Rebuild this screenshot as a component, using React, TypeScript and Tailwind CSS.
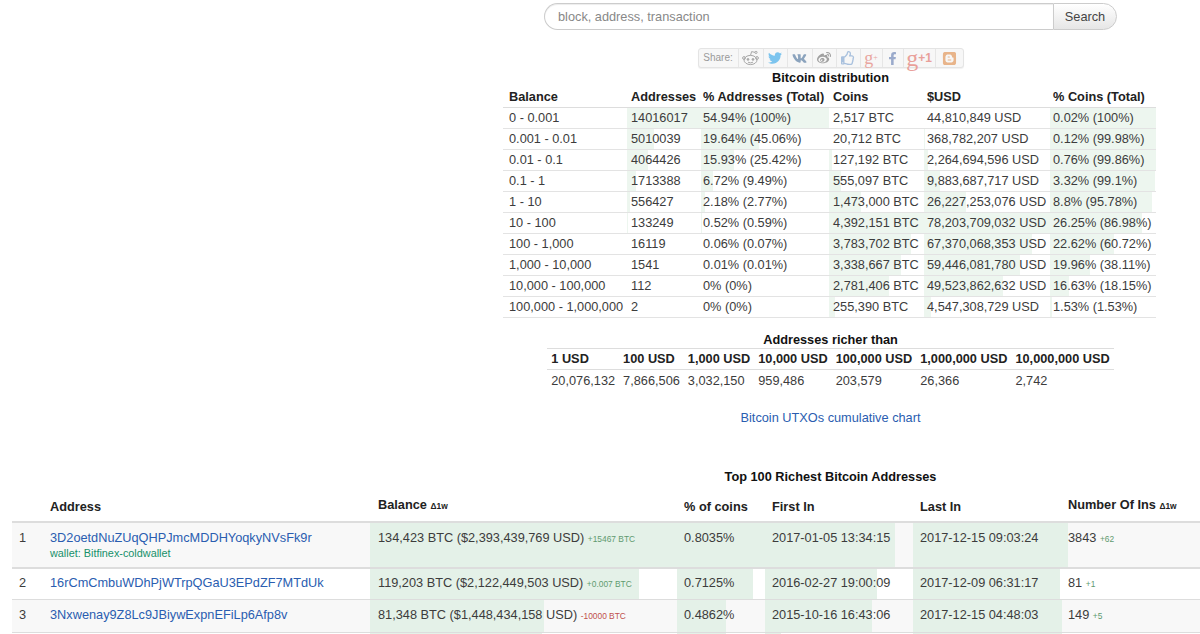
import React from "react";
import { FaTwitter, FaVk, FaWeibo, FaRegThumbsUp, FaFacebookF, FaBlogger } from "react-icons/fa";

const bar = (pct: number, color: string) => ({
  backgroundImage: `linear-gradient(90deg, ${color} ${pct}%, transparent ${pct}%)`,
});
const T = "#edf6ef";
const B = "#e4f1e8";

const dist = [
  ["0 - 0.001", "14016017", 100, "54.94% (100%)", 100, "2,517 BTC", 0.06, "44,810,849 USD", "0.02% (100%)", 100],
  ["0.001 - 0.01", "5010039", 36, "19.64% (45.06%)", 45.06, "20,712 BTC", 0.5, "368,782,207 USD", "0.12% (99.98%)", 99.98],
  ["0.01 - 0.1", "4064426", 29, "15.93% (25.42%)", 25.42, "127,192 BTC", 2.9, "2,264,694,596 USD", "0.76% (99.86%)", 99.86],
  ["0.1 - 1", "1713388", 12, "6.72% (9.49%)", 9.49, "555,097 BTC", 12.6, "9,883,687,717 USD", "3.32% (99.1%)", 99.1],
  ["1 - 10", "556427", 4, "2.18% (2.77%)", 2.77, "1,473,000 BTC", 33.5, "26,227,253,076 USD", "8.8% (95.78%)", 95.78],
  ["10 - 100", "133249", 1, "0.52% (0.59%)", 0.59, "4,392,151 BTC", 100, "78,203,709,032 USD", "26.25% (86.98%)", 86.98],
  ["100 - 1,000", "16119", 0, "0.06% (0.07%)", 0.07, "3,783,702 BTC", 86, "67,370,068,353 USD", "22.62% (60.72%)", 60.72],
  ["1,000 - 10,000", "1541", 0, "0.01% (0.01%)", 0.01, "3,338,667 BTC", 76, "59,446,081,780 USD", "19.96% (38.11%)", 38.11],
  ["10,000 - 100,000", "112", 0, "0% (0%)", 0, "2,781,406 BTC", 63, "49,523,862,632 USD", "16.63% (18.15%)", 18.15],
  ["100,000 - 1,000,000", "2", 0, "0% (0%)", 0, "255,390 BTC", 5.8, "4,547,308,729 USD", "1.53% (1.53%)", 1.53],
] as const;

const richer = [
  ["1 USD", "20,076,132"],
  ["100 USD", "7,866,506"],
  ["1,000 USD", "3,032,150"],
  ["10,000 USD", "959,486"],
  ["100,000 USD", "203,579"],
  ["1,000,000 USD", "26,366"],
  ["10,000,000 USD", "2,742"],
];

const rich = [
  {
    n: "1", a: "3D2oetdNuZUqQHPJmcMDDHYoqkyNVsFk9r", wallet: "wallet: Bitfinex-coldwallet",
    b: "134,423 BTC ($2,393,439,769 USD)", d: "+15467 BTC", neg: false, bp: 100,
    pc: "0.8035%", pp: 100, f: "2017-01-05 13:34:15", fp: 88, l: "2017-12-15 09:03:24", lp: 100,
    i: "3843", id: "+62", rowH: "h-[46px]", pt: "pt-[6px]",
  },
  {
    n: "2", a: "16rCmCmbuWDhPjWTrpQGaU3EPdZF7MTdUk", wallet: "",
    b: "119,203 BTC ($2,122,449,503 USD)", d: "+0.007 BTC", neg: false, bp: 87.6,
    pc: "0.7125%", pp: 86, f: "2016-02-27 19:00:09", fp: 76, l: "2017-12-09 06:31:17", lp: 95,
    i: "81", id: "+1", rowH: "h-[31px]", pt: "pt-[5px]",
  },
  {
    n: "3", a: "3Nxwenay9Z8Lc9JBiywExpnEFiLp6Afp8v", wallet: "",
    b: "81,348 BTC ($1,448,434,158 USD)", d: "-10000 BTC", neg: true, bp: 56.7,
    pc: "0.4862%", pp: 56, f: "2015-10-16 16:43:06", fp: 72, l: "2017-12-15 04:48:03", lp: 96,
    i: "149", id: "+5", rowH: "h-[33px]", pt: "pt-[6px]",
  },
];

function Reddit() {
  return (
    <svg width="17" height="16" viewBox="0 0 17 16" fill="none" stroke="#a8a8a8" strokeWidth="1">
      <ellipse cx="8.5" cy="10" rx="6.5" ry="4.6" />
      <circle cx="2" cy="8" r="1.4" />
      <circle cx="15" cy="8" r="1.4" />
      <path d="M8.5 5.4 9.6 1.6 13 2.4" />
      <circle cx="14" cy="2.4" r="1.1" />
      <circle cx="6" cy="9.4" r="0.9" fill="#a8a8a8" />
      <circle cx="11" cy="9.4" r="0.9" fill="#a8a8a8" />
      <path d="M6 12.2q2.5 1.4 5 0" />
    </svg>
  );
}

function ShareBar() {
  const cell = "flex items-center justify-center h-full border-r border-[#e6e6e6]";
  return (
    <div className="flex items-center h-[20px] w-[266px] mt-[18px] bg-[#f7f7f7] border border-[#e4e4e4] rounded-[3px] shadow-[0_1px_1px_rgba(0,0,0,0.06)]">
      <span className={`${cell} w-[40px] text-[10px] text-[#9a9a9a]`}>Share:</span>
      <span className={`${cell} w-[25px]`}><Reddit /></span>
      <span className={`${cell} w-[24px] text-[#7cc4ee] text-[14px]`}><FaTwitter /></span>
      <span className={`${cell} w-[25px] text-[#8ba3bd] text-[15px]`}><FaVk /></span>
      <span className={`${cell} w-[24px] text-[#a0a0a0] text-[14px]`}><FaWeibo /></span>
      <span className={`${cell} w-[24px] text-[#a9c1de] text-[14px]`}><FaRegThumbsUp /></span>
      <span className={`${cell} w-[22px] text-[#e9a6a0] text-[18px] leading-[16px] font-['Liberation_Serif',serif]`}>g<span className="text-[8px]">+</span></span>
      <span className={`${cell} w-[21px] text-[#9aaacb] text-[13px]`}><FaFacebookF /></span>
      <span className={`${cell} w-[32px] text-[#e9a09a]`}>
        <span className="text-[24px] leading-[18px] font-['Liberation_Serif',serif]">g</span>
        <span className="text-[12px] font-bold">+1</span>
      </span>
      <span className="flex items-center justify-center h-full flex-1 text-[#e8b48a] text-[15px]"><FaBlogger /></span>
    </div>
  );
}

export default function App() {
  return (
    <div className="h-[634px] w-[1200px] overflow-hidden bg-white text-[#3c3c3c] text-[12.75px] leading-[18px] font-['Liberation_Sans',Arial,sans-serif]">
      <div className="ml-[503px] w-[655px] flex flex-col items-center pt-[3px]">
        <div className="flex w-[573px] h-[27px]">
          <div className="flex-1 flex items-center pl-[13px] border border-r-0 border-[#ccc] rounded-l-[14px] text-[#888] shadow-[inset_0_1px_1px_rgba(0,0,0,0.075)]">
            block, address, transaction
          </div>
          <div className="w-[64px] flex items-center justify-center border border-[#ccc] rounded-r-[14px] bg-gradient-to-b from-white to-[#e6e6e6] text-[#444]">
            Search
          </div>
        </div>

        <ShareBar />

        <div className="h-[19px] flex items-center font-bold text-[#111]">Bitcoin distribution</div>

        <table className="w-[653px] table-fixed border-collapse self-start">
          <colgroup>
            <col className="w-[124px]" />
            <col className="w-[74px]" />
            <col className="w-[128px]" />
            <col className="w-[95px]" />
            <col className="w-[126px]" />
            <col className="w-[106px]" />
          </colgroup>
          <thead>
            <tr className="h-[20px] border-b border-[#ddd] font-bold text-[#222]">
              <th className="text-left font-bold pl-[6px]">Balance</th>
              <th className="text-left font-bold pl-[4px]">Addresses</th>
              <th className="text-left font-bold pl-[2px] whitespace-nowrap">% Addresses (Total)</th>
              <th className="text-left font-bold pl-[4px]">Coins</th>
              <th className="text-left font-bold pl-[3px]">$USD</th>
              <th className="text-left font-bold pl-[3px] whitespace-nowrap">% Coins (Total)</th>
            </tr>
          </thead>
          <tbody>
            {dist.map((r) => (
              <tr key={r[0]} className="h-[21px] border-b border-[#e3e3e3]">
                <td className="pl-[6px] whitespace-nowrap">{r[0]}</td>
                <td className="pl-[4px]" style={bar(r[2], T)}>{r[1]}</td>
                <td className="pl-[2px] whitespace-nowrap" style={bar(r[4], T)}>{r[3]}</td>
                <td className="pl-[4px] whitespace-nowrap" style={bar(r[6], T)}>{r[5]}</td>
                <td className="pl-[3px] whitespace-nowrap" style={bar(r[6], T)}>{r[7]}</td>
                <td className="pl-[3px] whitespace-nowrap" style={bar(r[9], T)}>{r[8]}</td>
              </tr>
            ))}
          </tbody>
        </table>

        <div className="h-[16px] mt-[14px] flex items-center font-bold text-[#111]">Addresses richer than</div>

        <table className="border-collapse">
          <thead>
            <tr className="h-[21px] border-y border-[#ddd]">
              {richer.map((c) => (
                <th key={c[0]} className="text-left font-bold text-[#222] pl-[4px] pr-[4px] whitespace-nowrap">{c[0]}</th>
              ))}
            </tr>
          </thead>
          <tbody>
            <tr className="h-[23px]">
              {richer.map((c) => (
                <td key={c[0]} className="pl-[4px] pr-[4px] whitespace-nowrap">{c[1]}</td>
              ))}
            </tr>
          </tbody>
        </table>

        <a className="mt-[17px] text-[#2a5db0]">Bitcoin UTXOs cumulative chart</a>

        <div className="mt-[41px] h-[18px] font-bold text-[#111]">Top 100 Richest Bitcoin Addresses</div>
      </div>

      <table className="ml-[12px] mt-[3px] w-[1188px] table-fixed border-collapse">
        <colgroup>
          <col className="w-[31px]" />
          <col className="w-[327px]" />
          <col className="w-[307px]" />
          <col className="w-[88px]" />
          <col className="w-[148px]" />
          <col className="w-[155px]" />
          <col />
        </colgroup>
        <thead>
          <tr className="h-[33px] border-b-2 border-[#ddd]">
            <th />
            <th className="text-left font-bold text-[#222] pl-[7px] pt-[4px]">Address</th>
            <th className="text-left font-bold text-[#222] pl-[8px]">Balance <span className="text-[8.4px]">Δ1w</span></th>
            <th className="text-left font-bold text-[#222] pl-[7px] pt-[4px]">% of coins</th>
            <th className="text-left font-bold text-[#222] pl-[7px] pt-[4px]">First In</th>
            <th className="text-left font-bold text-[#222] pl-[7px] pt-[4px]">Last In</th>
            <th className="text-left font-bold text-[#222] whitespace-nowrap">Number Of Ins <span className="text-[8.4px]">Δ1w</span></th>
          </tr>
        </thead>
        <tbody>
          {rich.map((r, i) => (
            <tr key={r.n} className={`${r.rowH} border-b border-[#ddd] ${i % 2 === 0 ? "bg-[#f8f8f8]" : "bg-white"} ${i === 0 ? "border-b-2" : ""} align-top`}>
              <td className={`pl-[7px] ${r.pt}`}>{r.n}</td>
              <td className={`pl-[7px] ${r.pt} whitespace-nowrap`}>
                <a className="text-[#2a5db0]">{r.a}</a>
                {r.wallet && <div className="text-[10.85px] leading-[13px] text-[#16906a]">{r.wallet}</div>}
              </td>
              <td className={`pl-[8px] ${r.pt} whitespace-nowrap`} style={bar(r.bp, B)}>
                {r.b} <span className={`text-[8.4px] ${r.neg ? "text-[#c0504d]" : "text-[#5f9a6f]"}`}>{r.d}</span>
              </td>
              <td className={`pl-[7px] ${r.pt}`} style={bar(r.pp, B)}>{r.pc}</td>
              <td className={`pl-[7px] ${r.pt} whitespace-nowrap`} style={bar(r.fp, B)}>{r.f}</td>
              <td className={`pl-[7px] ${r.pt} whitespace-nowrap`} style={bar(r.lp, B)}>{r.l}</td>
              <td className={`${r.pt} whitespace-nowrap`}>
                {r.i} <span className="text-[8.4px] text-[#5f9a6f]">{r.id}</span>
              </td>
            </tr>
          ))}
          <tr className="h-[20px]">
            <td />
            <td />
            <td style={bar(56, B)} />
            <td style={bar(56, B)} />
            <td style={bar(11, B)} />
            <td style={bar(96, B)} />
            <td />
          </tr>
        </tbody>
      </table>
    </div>
  );
}
